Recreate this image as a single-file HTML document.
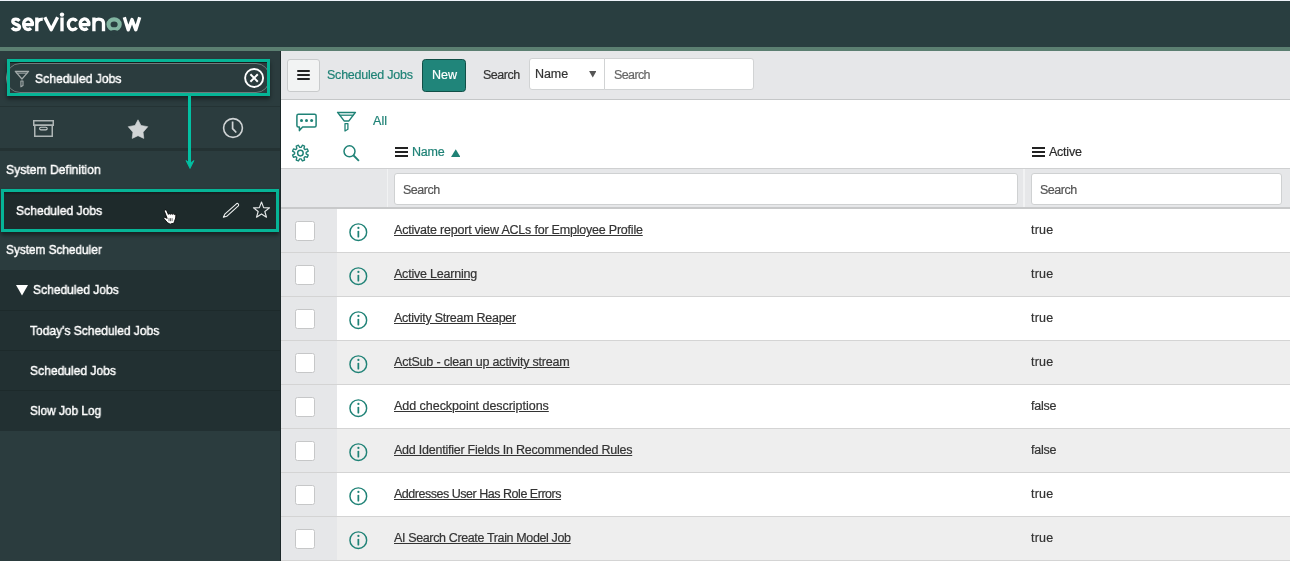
<!DOCTYPE html>
<html><head><meta charset="utf-8">
<style>
*{box-sizing:border-box;margin:0;padding:0}
html,body{width:1290px;height:561px;overflow:hidden;background:#fff;font-family:"Liberation Sans",sans-serif;font-size:12.5px}
.a{position:absolute}
.t{position:absolute;white-space:nowrap;will-change:transform}
.c{font-size:12.5px;letter-spacing:-0.22px;-webkit-text-stroke:0.2px currentColor}
.sb{color:#fff;-webkit-text-stroke:0.45px #fff;font-size:13px;letter-spacing:-0.4px}
.hl{border:3px solid #06b496}
.sub{left:0;width:280px;height:40px;background:#223032;border-top:1px solid #1d2a2b}
</style></head><body>
<div class="a" style="left:0;top:0;width:1290px;height:47px;background:#293e40;border-top:1px solid #eef3fa"></div>
<div class="a" style="left:0;top:47px;width:1290px;height:4px;background:#5b7f71"></div>
<svg class="a" style="left:0;top:0" width="150" height="40" viewBox="0 0 150 40"><g fill="none" stroke="#fff" stroke-width="3.35" stroke-linejoin="round">
<path d="M19.4 20.9 C18.4 19.6 17.2 19.1 15.9 19.1 C13.9 19.1 12.8 20.2 12.8 21.6 C12.8 24.9 19.5 23.7 19.5 27.1 C19.5 28.8 18.1 29.7 16 29.7 C14.4 29.7 13 29.1 12 27.7"/>
<path d="M23.7 24.6 H32.4 A4.4 5.3 0 1 0 31 28.1"/>
<path d="M36.8 17.5 V31.3 M36.8 24.5 C36.8 20.6 39 19.1 42.8 19.1"/>
<path d="M44.8 17.3 L51.2 29.8 L57.6 17.3"/>
<path d="M62 17.5 V31.3"/>
<path d="M76.6 21.2 A4.6 5.3 0 1 0 76.6 27.6"/>
<path d="M80.2 24.6 H88.9 A4.4 5.3 0 1 0 87.5 28.1"/>
<path d="M93.9 17.5 V31.3 M93.9 24.2 C93.9 20.8 95.9 19.1 98.7 19.1 C101.6 19.1 103.5 20.8 103.5 23.6 V31.3"/>
<path d="M124.3 17.3 L128.2 29.8 L132 19.6 L135.8 29.8 L139.7 17.3"/>
</g>
<circle cx="62" cy="14.6" r="2.2" fill="#fff"/>
<ellipse cx="114.1" cy="24.4" rx="5.6" ry="5.0" fill="none" stroke="#81b5a1" stroke-width="4.1"/>
<ellipse cx="114.1" cy="32.6" rx="4.2" ry="2.6" fill="#293e40"/>
</svg>
<div class="a" style="left:0;top:51px;width:280px;height:510px;background:#2b3c3e"></div>
<div class="a" style="left:7px;top:59px;width:263px;height:37px;box-shadow:0 3px 4px rgba(0,0,0,.45)"></div>
<div class="a" style="left:6px;top:63px;width:264px;height:30px;border:1px solid #6f7b7b;border-radius:14px;background:#2b3c3e"></div>
<div class="a hl" style="left:7px;top:59px;width:263px;height:37px"></div>
<div class="a" style="left:10px;top:62px;width:257px;height:1px;background:#161d1e"></div>
<svg class="a" style="left:14px;top:69px" width="16" height="20" viewBox="0 0 16 20"><path d="M1.3 2.3 H14.6 L7.95 10 Z" fill="none" stroke="#a4abab" stroke-width="1.2" stroke-linejoin="round"/><path d="M2.6 4.1 H13.3" stroke="#a4abab" stroke-width="1.1"/><path d="M6.9 12 H9 V16.6 L6.9 17.8 Z" fill="none" stroke="#a4abab" stroke-width="1.1" stroke-linejoin="round"/></svg>
<div class="t sb" style="left:35px;top:72px;line-height:13px;;letter-spacing:0;transform:scaleX(0.9348);transform-origin:0 0">Scheduled Jobs</div>

<svg class="a" style="left:243px;top:67.4px" width="22" height="22" viewBox="0 0 22 22"><circle cx="11.1" cy="11" r="9" fill="none" stroke="#fff" stroke-width="1.9"/><path d="M7.4 7.3 L14.8 14.7 M14.8 7.3 L7.4 14.7" stroke="#fff" stroke-width="2"/></svg>
<div class="a" style="left:0;top:106px;width:280px;height:1px;background:#243334"></div>
<svg class="a" style="left:32px;top:119px" width="23" height="19" viewBox="0 0 23 19"><rect x="1.75" y="1.75" width="19.5" height="4.5" fill="none" stroke="#aeb5b5" stroke-width="1.5"/><rect x="2.75" y="6.25" width="17.5" height="11" fill="none" stroke="#aeb5b5" stroke-width="1.5"/><rect x="7.6" y="8.3" width="7.6" height="2.6" rx="1.3" fill="none" stroke="#c5cbcb" stroke-width="1.1"/></svg>
<svg class="a" style="left:127px;top:118.5px" width="22" height="21" viewBox="0 0 22 21"><path d="M11 0.8 L14 6.4 L20.8 7.7 L16.1 13.2 L16.8 19.4 L11 16.7 L5.2 19.4 L5.9 13.2 L1.2 7.7 L8 6.4 Z" fill="#d0d4d5" stroke="#d0d4d5" stroke-width="0.6" stroke-linejoin="round"/></svg>
<svg class="a" style="left:221.5px;top:117.2px" width="22" height="22" viewBox="0 0 22 22"><circle cx="11" cy="11" r="9.4" fill="none" stroke="#d0d4d5" stroke-width="1.6"/><path d="M10.6 4.6 V11.6 L14.3 15.5" fill="none" stroke="#d0d4d5" stroke-width="1.7"/></svg>
<div class="a" style="left:0;top:148px;width:280px;height:3px;background:#243233"></div>
<div class="t sb" style="left:6px;top:163px;line-height:13px;;letter-spacing:0;transform:scaleX(0.9356);transform-origin:0 0">System Definition</div>

<div class="a" style="left:1px;top:189px;width:278px;height:43px;background:#1e2a2b;box-shadow:0 3px 4px rgba(0,0,0,.45)"></div>
<div class="a hl" style="left:1px;top:189px;width:278px;height:43px"></div>
<div class="a" style="left:4px;top:192px;width:272px;height:3px;background:linear-gradient(#141c1d,#1e2a2b)"></div>
<div class="t sb" style="left:16px;top:204px;line-height:13px;;letter-spacing:0;transform:scaleX(0.9315);transform-origin:0 0">Scheduled Jobs</div>

<svg class="a" style="left:218px;top:198px" width="26" height="26" viewBox="0 0 26 26"><path d="M5.4 19.3 L6.8 16.2 L18.4 5.8 Q19.4 5 20.3 6 Q21.1 7 20.3 7.8 L8.7 18.3 Z" fill="none" stroke="#eef0f0" stroke-width="1.1" stroke-linejoin="round"/></svg>
<svg class="a" style="left:251.5px;top:201.3px" width="19" height="17.5" viewBox="0 0 21 20"><path d="M10.5 1.2 L12.9 7.6 L19.7 7.8 L14.3 12 L16.2 18.6 L10.5 14.8 L4.8 18.6 L6.7 12 L1.3 7.8 L8.1 7.6 Z" fill="none" stroke="#e6e9e9" stroke-width="1.3" stroke-linejoin="round"/></svg>
<svg class="a" style="left:158px;top:204px" width="24" height="24" viewBox="0 0 24 24"><path d="M7.2 6 C8 5.8 8.6 6.3 8.9 7 L10.4 10.4 L11.2 9.5 L12.2 10.4 L13.2 9.5 L14.2 10.4 L15.2 9.6 L16.2 10.5 L17.9 10.2 L17.7 14 L16.5 17.3 L15.6 19.6 L13.8 19.5 L12.2 20.2 L9.6 18.8 L6.2 15 C5.5 14.2 5.9 13.2 7 13.4 L9.2 14.4 L6.5 7.6 C6.3 6.9 6.5 6.1 7.2 6 Z" fill="#fff" stroke="#0a0a0a" stroke-width="0.9" stroke-linejoin="round"/><path d="M11 14.2 V17.2 M12.5 14.2 V17.2 M14.1 14.2 V17.2" stroke="#555" stroke-width="0.9"/></svg>
<div class="t sb" style="left:6px;top:243px;line-height:13px;;letter-spacing:0;transform:scaleX(0.9075);transform-origin:0 0">System Scheduler</div>

<div class="a sub" style="top:270px;border-top:0"></div>
<div class="a sub" style="top:310px"></div>
<div class="a sub" style="top:350px"></div>
<div class="a sub" style="top:390px;height:41px"></div>
<svg class="a" style="left:16px;top:285px" width="12" height="11" viewBox="0 0 12 11"><path d="M0 0 H12 L6 10.5 Z" fill="#fff"/></svg>
<div class="t sb" style="left:33px;top:283px;line-height:13px;;letter-spacing:0;transform:scaleX(0.9272);transform-origin:0 0">Scheduled Jobs</div>

<div class="t sb" style="left:30px;top:324px;line-height:13px;;letter-spacing:0;transform:scaleX(0.9250);transform-origin:0 0">Today's Scheduled Jobs</div>

<div class="t sb" style="left:30px;top:364px;line-height:13px;;letter-spacing:0;transform:scaleX(0.9293);transform-origin:0 0">Scheduled Jobs</div>

<div class="t sb" style="left:30px;top:404px;line-height:13px;;letter-spacing:0;transform:scaleX(0.9128);transform-origin:0 0">Slow Job Log</div>

<div class="a" style="left:188px;top:96px;width:3px;height:68px;background:#02c0a2"></div>
<svg class="a" style="left:184px;top:158px" width="12" height="12" viewBox="0 0 12 12"><path d="M2 2.5 L6 5.3 L10 2.5 L6 10.5 Z" fill="#02c0a2" stroke="#02c0a2" stroke-width="0.8" stroke-linejoin="round"/></svg>
<div class="a" style="left:280px;top:51px;width:1px;height:510px;background:#1c2829"></div>
<div class="a" style="left:281px;top:51px;width:1009px;height:49px;background:#e6e7e9;border-bottom:1px solid #c5c7c8"></div>
<div class="a" style="left:287px;top:59px;width:33px;height:33px;background:#f2f3f3;border:1px solid #c9cbcc;border-radius:3px"></div>
<div class="a" style="left:297px;top:70px;width:13px;height:2px;background:#222;border-radius:1px"></div>
<div class="a" style="left:297px;top:74px;width:13px;height:2px;background:#222;border-radius:1px"></div>
<div class="a" style="left:297px;top:78px;width:13px;height:2px;background:#222;border-radius:1px"></div>
<div class="t c" style="left:327px;top:69px;line-height:12.5px;color:#1f8276;letter-spacing:-0.223px">Scheduled Jobs</div>

<div class="a" style="left:422px;top:59px;width:44px;height:33px;background:#20857a;border:1px solid #114f47;border-radius:3.5px"></div>
<div class="t c" style="left:432px;top:69px;line-height:12.5px;color:#fff;-webkit-text-stroke:0.2px #fff;letter-spacing:0.0px">New</div>

<div class="t c" style="left:483px;top:69px;line-height:12.5px;color:#333;letter-spacing:-0.5px">Search</div>

<div class="a" style="left:529px;top:58px;width:76px;height:32px;background:#fff;border:1px solid #d1d3d4;border-radius:3px 0 0 3px"></div>
<div class="t c" style="left:535px;top:68px;line-height:12.5px;color:#333;letter-spacing:-0.066px">Name</div>

<svg class="a" style="left:588.5px;top:71px" width="7.5" height="6.5" viewBox="0 0 9 8"><path d="M0 0 H9 L4.5 8 Z" fill="#555"/></svg>
<div class="a" style="left:604px;top:58px;width:150px;height:32px;background:#fff;border:1px solid #d1d3d4;border-radius:0 3px 3px 0"></div>
<div class="t c" style="left:614px;top:69px;line-height:12.5px;color:#666;letter-spacing:-0.62px">Search</div>

<svg class="a" style="left:295px;top:112px" width="24" height="21" viewBox="0 0 24 21"><path d="M3.4 2.3 H19.6 Q21.1 2.3 21.1 3.8 V13.6 Q21.1 15.1 19.6 15.1 H7.6 L4.4 18.6 V15.1 H3.4 Q1.9 15.1 1.9 13.6 V3.8 Q1.9 2.3 3.4 2.3 Z" fill="none" stroke="#1f8276" stroke-width="1.5" stroke-linejoin="round"/><circle cx="6.5" cy="8.5" r="1.5" fill="#1f8276"/><circle cx="11.5" cy="8.5" r="1.5" fill="#1f8276"/><circle cx="16.6" cy="8.5" r="1.5" fill="#1f8276"/></svg>
<svg class="a" style="left:336px;top:110px" width="21" height="23" viewBox="0 0 21 23"><path d="M1.6 2.4 H19.4 L12.9 10.9 H8.1 Z" fill="none" stroke="#1f8276" stroke-width="1.5" stroke-linejoin="round"/><path d="M3.6 5.2 H17.4" stroke="#1f8276" stroke-width="1.3"/><path d="M9 13.6 H11.9 V19.2 L9 21 Z" fill="none" stroke="#1f8276" stroke-width="1.3" stroke-linejoin="round"/></svg>
<div class="t c" style="left:373px;top:115px;line-height:12.5px;color:#1f8276;letter-spacing:0.1px">All</div>

<svg class="a" style="left:291px;top:144px" width="19" height="19" viewBox="0 0 19 19"><path d="M10.11 3.34 L11.36 1.24 L13.57 2.16 L12.97 4.53 L13.97 5.53 L16.34 4.93 L17.26 7.14 L15.16 8.39 L15.16 9.81 L17.26 11.06 L16.34 13.27 L13.97 12.67 L12.97 13.67 L13.57 16.04 L11.36 16.96 L10.11 14.86 L8.69 14.86 L7.44 16.96 L5.23 16.04 L5.83 13.67 L4.83 12.67 L2.46 13.27 L1.54 11.06 L3.64 9.81 L3.64 8.39 L1.54 7.14 L2.46 4.93 L4.83 5.53 L5.83 4.53 L5.23 2.16 L7.44 1.24 L8.69 3.34 Z" fill="none" stroke="#1f8276" stroke-width="1.35" stroke-linejoin="round"/><circle cx="9.4" cy="9.1" r="2.8" fill="none" stroke="#1f8276" stroke-width="1.45"/></svg>
<svg class="a" style="left:341px;top:143px" width="20" height="20" viewBox="0 0 20 20"><circle cx="8.5" cy="8.3" r="5.5" fill="none" stroke="#1f8276" stroke-width="1.5"/><path d="M12.6 12.5 L17.9 17.9" stroke="#1f8276" stroke-width="1.8"/></svg>
<div class="a" style="left:395px;top:147px;width:13px;height:2px;background:#222"></div>
<div class="a" style="left:395px;top:151px;width:13px;height:2px;background:#222"></div>
<div class="a" style="left:395px;top:155px;width:13px;height:2px;background:#222"></div>
<div class="a" style="left:1032px;top:147px;width:13px;height:2px;background:#222"></div>
<div class="a" style="left:1032px;top:151px;width:13px;height:2px;background:#222"></div>
<div class="a" style="left:1032px;top:155px;width:13px;height:2px;background:#222"></div>
<div class="t c" style="left:412px;top:146px;line-height:12.5px;color:#1f8276;letter-spacing:-0.201px">Name</div>

<svg class="a" style="left:450.5px;top:149.2px" width="9.5" height="8.3" viewBox="0 0 11 9"><path d="M0 9 H11 L5.5 0 Z" fill="#1f8276"/></svg>
<div class="t c" style="left:1049px;top:146px;line-height:12.5px;color:#2a2a2a;letter-spacing:-0.24px">Active</div>

<div class="a" style="left:281px;top:168px;width:1009px;height:1px;background:#cfd0d1"></div>
<div class="a" style="left:281px;top:169px;width:1009px;height:38px;background:#e6e7e9"></div>
<div class="a" style="left:281px;top:207px;width:1009px;height:2px;background:#c8c9ca"></div>
<div class="a" style="left:387px;top:169px;width:1px;height:38px;background:#f1f2f3"></div>
<div class="a" style="left:1023px;top:169px;width:2px;height:38px;background:#f1f2f3"></div>
<div class="a" style="left:394px;top:173px;width:624px;height:32px;background:#fff;border:1px solid #cfd1d2;border-radius:3px"></div>
<div class="t c" style="left:403px;top:184px;line-height:12.5px;color:#555;letter-spacing:-0.5px">Search</div>

<div class="a" style="left:1031px;top:173px;width:251px;height:32px;background:#fff;border:1px solid #cfd1d2;border-radius:3px"></div>
<div class="t c" style="left:1040px;top:184px;line-height:12.5px;color:#555;letter-spacing:-0.5px">Search</div>

<div class="a" style="left:281px;top:209px;width:1009px;height:43px;background:#fff"></div>
<div class="a" style="left:281px;top:252px;width:1009px;height:1px;background:#d4d4d4"></div>
<div class="a" style="left:281px;top:209px;width:56px;height:43px;background:#e6e7e9"></div>
<div class="a" style="left:295px;top:221px;width:20px;height:20px;background:#fff;border:1px solid #c6c7c8;border-radius:2.5px"></div>
<svg class="a" style="left:348px;top:222px" width="20" height="20" viewBox="0 0 20 20"><circle cx="10.3" cy="10.2" r="8.35" fill="none" stroke="#1f8276" stroke-width="1.45"/><circle cx="10.4" cy="5.9" r="1.1" fill="#1f8276"/><path d="M10.35 9.5 V14.7" stroke="#1f8276" stroke-width="1.75" stroke-linecap="round"/></svg>
<div class="t c" style="left:394px;top:224px;line-height:12.5px;color:#333;text-decoration:underline;letter-spacing:-0.211px">Activate report view ACLs for Employee Profile</div>

<div class="t c" style="left:1031px;top:224px;line-height:12.5px;color:#333;letter-spacing:0.234px">true</div>

<div class="a" style="left:281px;top:253px;width:1009px;height:43px;background:#eeeeee"></div>
<div class="a" style="left:281px;top:296px;width:1009px;height:1px;background:#d4d4d4"></div>
<div class="a" style="left:281px;top:253px;width:56px;height:43px;background:#e6e7e9"></div>
<div class="a" style="left:295px;top:265px;width:20px;height:20px;background:#fff;border:1px solid #c6c7c8;border-radius:2.5px"></div>
<svg class="a" style="left:348px;top:266px" width="20" height="20" viewBox="0 0 20 20"><circle cx="10.3" cy="10.2" r="8.35" fill="none" stroke="#1f8276" stroke-width="1.45"/><circle cx="10.4" cy="5.9" r="1.1" fill="#1f8276"/><path d="M10.35 9.5 V14.7" stroke="#1f8276" stroke-width="1.75" stroke-linecap="round"/></svg>
<div class="t c" style="left:394px;top:268px;line-height:12.5px;color:#333;text-decoration:underline;letter-spacing:-0.214px">Active Learning</div>

<div class="t c" style="left:1031px;top:268px;line-height:12.5px;color:#333;letter-spacing:0.234px">true</div>

<div class="a" style="left:281px;top:297px;width:1009px;height:43px;background:#fff"></div>
<div class="a" style="left:281px;top:340px;width:1009px;height:1px;background:#d4d4d4"></div>
<div class="a" style="left:281px;top:297px;width:56px;height:43px;background:#e6e7e9"></div>
<div class="a" style="left:295px;top:309px;width:20px;height:20px;background:#fff;border:1px solid #c6c7c8;border-radius:2.5px"></div>
<svg class="a" style="left:348px;top:310px" width="20" height="20" viewBox="0 0 20 20"><circle cx="10.3" cy="10.2" r="8.35" fill="none" stroke="#1f8276" stroke-width="1.45"/><circle cx="10.4" cy="5.9" r="1.1" fill="#1f8276"/><path d="M10.35 9.5 V14.7" stroke="#1f8276" stroke-width="1.75" stroke-linecap="round"/></svg>
<div class="t c" style="left:394px;top:312px;line-height:12.5px;color:#333;text-decoration:underline;letter-spacing:-0.268px">Activity Stream Reaper</div>

<div class="t c" style="left:1031px;top:312px;line-height:12.5px;color:#333;letter-spacing:0.234px">true</div>

<div class="a" style="left:281px;top:341px;width:1009px;height:43px;background:#eeeeee"></div>
<div class="a" style="left:281px;top:384px;width:1009px;height:1px;background:#d4d4d4"></div>
<div class="a" style="left:281px;top:341px;width:56px;height:43px;background:#e6e7e9"></div>
<div class="a" style="left:295px;top:353px;width:20px;height:20px;background:#fff;border:1px solid #c6c7c8;border-radius:2.5px"></div>
<svg class="a" style="left:348px;top:354px" width="20" height="20" viewBox="0 0 20 20"><circle cx="10.3" cy="10.2" r="8.35" fill="none" stroke="#1f8276" stroke-width="1.45"/><circle cx="10.4" cy="5.9" r="1.1" fill="#1f8276"/><path d="M10.35 9.5 V14.7" stroke="#1f8276" stroke-width="1.75" stroke-linecap="round"/></svg>
<div class="t c" style="left:394px;top:356px;line-height:12.5px;color:#333;text-decoration:underline;letter-spacing:-0.197px">ActSub - clean up activity stream</div>

<div class="t c" style="left:1031px;top:356px;line-height:12.5px;color:#333;letter-spacing:0.234px">true</div>

<div class="a" style="left:281px;top:385px;width:1009px;height:43px;background:#fff"></div>
<div class="a" style="left:281px;top:428px;width:1009px;height:1px;background:#d4d4d4"></div>
<div class="a" style="left:281px;top:385px;width:56px;height:43px;background:#e6e7e9"></div>
<div class="a" style="left:295px;top:397px;width:20px;height:20px;background:#fff;border:1px solid #c6c7c8;border-radius:2.5px"></div>
<svg class="a" style="left:348px;top:398px" width="20" height="20" viewBox="0 0 20 20"><circle cx="10.3" cy="10.2" r="8.35" fill="none" stroke="#1f8276" stroke-width="1.45"/><circle cx="10.4" cy="5.9" r="1.1" fill="#1f8276"/><path d="M10.35 9.5 V14.7" stroke="#1f8276" stroke-width="1.75" stroke-linecap="round"/></svg>
<div class="t c" style="left:394px;top:400px;line-height:12.5px;color:#333;text-decoration:underline;letter-spacing:-0.032px">Add checkpoint descriptions</div>

<div class="t c" style="left:1031px;top:400px;line-height:12.5px;color:#333">false</div>

<div class="a" style="left:281px;top:429px;width:1009px;height:43px;background:#eeeeee"></div>
<div class="a" style="left:281px;top:472px;width:1009px;height:1px;background:#d4d4d4"></div>
<div class="a" style="left:281px;top:429px;width:56px;height:43px;background:#e6e7e9"></div>
<div class="a" style="left:295px;top:441px;width:20px;height:20px;background:#fff;border:1px solid #c6c7c8;border-radius:2.5px"></div>
<svg class="a" style="left:348px;top:442px" width="20" height="20" viewBox="0 0 20 20"><circle cx="10.3" cy="10.2" r="8.35" fill="none" stroke="#1f8276" stroke-width="1.45"/><circle cx="10.4" cy="5.9" r="1.1" fill="#1f8276"/><path d="M10.35 9.5 V14.7" stroke="#1f8276" stroke-width="1.75" stroke-linecap="round"/></svg>
<div class="t c" style="left:394px;top:444px;line-height:12.5px;color:#333;text-decoration:underline;letter-spacing:-0.234px">Add Identifier Fields In Recommended Rules</div>

<div class="t c" style="left:1031px;top:444px;line-height:12.5px;color:#333">false</div>

<div class="a" style="left:281px;top:473px;width:1009px;height:43px;background:#fff"></div>
<div class="a" style="left:281px;top:516px;width:1009px;height:1px;background:#d4d4d4"></div>
<div class="a" style="left:281px;top:473px;width:56px;height:43px;background:#e6e7e9"></div>
<div class="a" style="left:295px;top:485px;width:20px;height:20px;background:#fff;border:1px solid #c6c7c8;border-radius:2.5px"></div>
<svg class="a" style="left:348px;top:486px" width="20" height="20" viewBox="0 0 20 20"><circle cx="10.3" cy="10.2" r="8.35" fill="none" stroke="#1f8276" stroke-width="1.45"/><circle cx="10.4" cy="5.9" r="1.1" fill="#1f8276"/><path d="M10.35 9.5 V14.7" stroke="#1f8276" stroke-width="1.75" stroke-linecap="round"/></svg>
<div class="t c" style="left:394px;top:488px;line-height:12.5px;color:#333;text-decoration:underline;letter-spacing:-0.476px">Addresses User Has Role Errors</div>

<div class="t c" style="left:1031px;top:488px;line-height:12.5px;color:#333;letter-spacing:0.234px">true</div>

<div class="a" style="left:281px;top:517px;width:1009px;height:43px;background:#eeeeee"></div>
<div class="a" style="left:281px;top:560px;width:1009px;height:1px;background:#d4d4d4"></div>
<div class="a" style="left:281px;top:517px;width:56px;height:43px;background:#e6e7e9"></div>
<div class="a" style="left:295px;top:529px;width:20px;height:20px;background:#fff;border:1px solid #c6c7c8;border-radius:2.5px"></div>
<svg class="a" style="left:348px;top:530px" width="20" height="20" viewBox="0 0 20 20"><circle cx="10.3" cy="10.2" r="8.35" fill="none" stroke="#1f8276" stroke-width="1.45"/><circle cx="10.4" cy="5.9" r="1.1" fill="#1f8276"/><path d="M10.35 9.5 V14.7" stroke="#1f8276" stroke-width="1.75" stroke-linecap="round"/></svg>
<div class="t c" style="left:394px;top:532px;line-height:12.5px;color:#333;text-decoration:underline;letter-spacing:-0.364px">AI Search Create Train Model Job</div>

<div class="t c" style="left:1031px;top:532px;line-height:12.5px;color:#333;letter-spacing:0.234px">true</div>

</body></html>
